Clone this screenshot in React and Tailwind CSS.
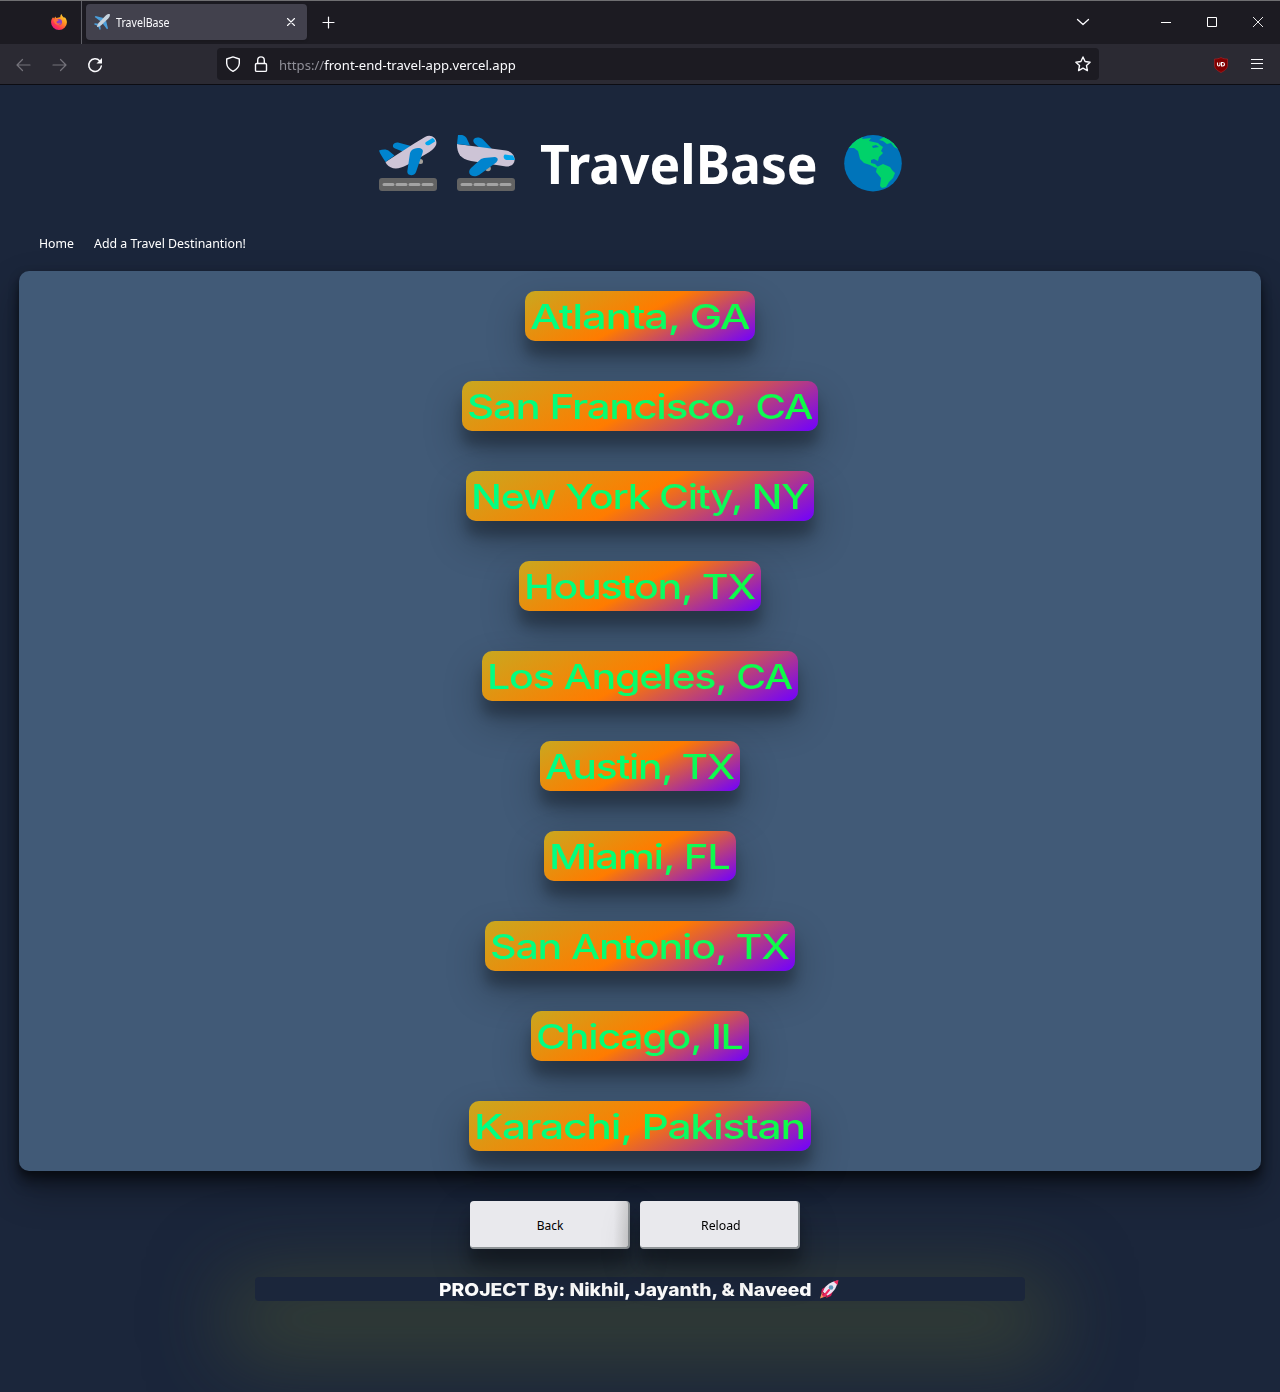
import { useLayoutEffect, useRef } from "react";

function Fit({ w, className = "", children }) {
  const ref = useRef(null);
  useLayoutEffect(() => {
    const el = ref.current;
    el.style.transform = `scaleX(${w / el.offsetWidth})`;
  }, [w]);
  return (
    <span className="block" style={{ width: w }}>
      <span ref={ref} className={`inline-block origin-left whitespace-nowrap ${className}`}>{children}</span>
    </span>
  );
}

const places = [
  ["Atlanta, GA", 230], ["San Francisco, CA", 356], ["New York City, NY", 348], ["Houston, TX", 242],
  ["Los Angeles, CA", 316], ["Austin, TX", 200], ["Miami, FL", 192], ["San Antonio, TX", 310],
  ["Chicago, IL", 218], ["Karachi, Pakistan", 342],
];

const stroke = { fill: "none", stroke: "#fbfbfe", strokeWidth: 1.4, strokeLinecap: "round", strokeLinejoin: "round" };

function Firefox() {
  return (
    <svg width="16" height="16" viewBox="0 0 16 16">
      <defs>
        <linearGradient id="ff" x1="1" y1="0" x2="0.2" y2="1">
          <stop offset="0" stopColor="#fff044" /><stop offset=".4" stopColor="#ff9a1f" />
          <stop offset=".75" stopColor="#ff3a4c" /><stop offset="1" stopColor="#e5148c" />
        </linearGradient>
      </defs>
      <path d="M2 3.2 3.2 4.5 4.2 2.4 5.4 4.1C7 3.4 8.4 3.2 9.3 3.2 9.2 1.9 9.8.7 10.5 0 10.8 1.8 12.2 2.6 13.2 4L13.5 2.9C15.3 4.6 16 6.6 15.9 8.5A7.9 7.5 0 0 1 .1 8.5C0 6.500.6 4.6 2 3.2Z" fill="url(#ff)" />
      <circle cx="8" cy="8.1" r="3" fill="#8a3fc8" />
      <path d="M2.5 6.300C4.500 4.700 7 5 8 6.200 6.500 6.400 6.600 7.500 5.300 7.800 5.500 10 8.500 10 10 8.600 8.800 12 3.700 12 2.500 6.300Z" fill="#ff7139" />
    </svg>
  );
}

function TabPlane() {
  return (
    <svg width="16" height="16" viewBox="0 0 16 16">
      <path d="M9.500 4 1.500 2 .7 3 6.500 7.300ZM12 6.500 14 14.500 13 15.300 8.700 9.500Z" fill="#4a9fdc" />
      <path d="M4.800 9.800.8 9.300 0 10.200 3.800 12ZM6.200 11.200 6.700 15.200 5.800 16 4 12.200Z" fill="#4a9fdc" />
      <path d="M15.800.2C14.500-.2 12.900.3 11.500 1.700L5 8.500C3.800 10 2.900 11.500 3 13 4.500 13.100 6 12.200 7.500 11L14.300 4.500C15.700 3.100 16.200 1.500 15.800.2Z" fill="#c5d3de" />
    </svg>
  );
}

function Runway() {
  return (
    <>
      <rect x="0" y="43" width="58" height="13" rx="3" fill="#636363" />
      <path d="M5 49.500H14M18 49.500H27M31 49.500H40M44 49.500H53" stroke="#a3a3a3" strokeWidth="3" strokeLinecap="round" />
    </>
  );
}

function TakeOff() {
  return (
    <svg width="58" height="57" viewBox="0 0 58 57">
      <circle cx="41.500" cy="26.500" r="2.500" fill="#a5a19c" />
      <path d="M32 11 19 7.500C14 7 12 12 16 13.500L25 17Z" fill="#0084ce" />
      <path d="M6.500 27 36 8 46 2C53-2 60 5 56.500 11 55 14 52 16 47 19L28 30C19 35 12 34.500 7.500 29Z" fill="#cdc4d6" />
      <path d="M0 15.500C4 14 8 14 10 16L15.500 20.500 6.500 27C4 23 1 19 0 15.500Z" fill="#0084ce" />
      <path d="M47 7 53.500 3C55 4 56 5 56 6.500L50.500 10C47 11 45 8.500 47 7Z" fill="#00a6ed" />
      <path d="M32 16C37 11 46 13 43.500 18L37 37C35 42 27 41 28.500 35L31 18Z" fill="#0084ce" />
      <Runway />
    </svg>
  );
}

function Landing() {
  return (
    <svg width="58" height="57" viewBox="0 0 58 57">
      <circle cx="31" cy="33.500" r="2.800" fill="#a5a19c" />
      <path d="M35 14 26 4.500C20 0 13 4 18 9L23 13Z" fill="#0084ce" />
      <path d="M0 9 49 15.500C60 17 61 32 49 31.500L14 26C3 24 0 18 0 9Z" fill="#cdc4d6" />
      <path d="M1 0C7-1 9 2 10 4L13 10.500 0 9Z" fill="#0084ce" />
      <path d="M48 19.500 56 20.500 58 25H49.500C46 24.500 46 20 48 19.500Z" fill="#00a6ed" />
      <path d="M27 23 38 22C42 23 41 26 38.500 28L22 40C15 44 9 38 14 33L24 24Z" fill="#0084ce" />
      <Runway />
    </svg>
  );
}

function Globe() {
  return (
    <svg width="58" height="57" viewBox="0 0 58 57">
      <defs><clipPath id="globe"><ellipse cx="29" cy="28.200" rx="28.800" ry="28.200" /></clipPath></defs>
      <g clipPath="url(#globe)">
        <rect width="58" height="57" fill="#0074ba" />
        <path d="M4 13 14 3 19 2 18 4 27 3 25 6 34 8 36 10 39 12 37 16 39 18 35 22 34 26 30 24 27 25 27 28 31 29 34 32 32 33 26 30 20 28 16 24 14 16 10 13Z" fill="#00d26a" />
        <path d="M35 5 40 2 48 5 54 14 50 12 47 8 43 9 39 6ZM33 32 39 29 46 32 48 35 51 38 49 43 45 47 42 52 38 53 36 51 37 43 32 37Z" fill="#00d26a" />
        <path d="M28 11 32 10 35 12 29 13Z" fill="#0074ba" />
      </g>
    </svg>
  );
}

function Rocket() {
  return (
    <svg width="20" height="19" viewBox="0 0 20 19">
      <path d="M3 12 1 18.500 8 16Z" fill="#f8915f" />
      <path d="M8 6 3 9 2 13 8 10ZM14 11 12 16 7 18 9 12Z" fill="#d1164f" />
      <path d="M4 12C5 7 10 2 18.500.5 18.500 8 13 14 8 15.500Z" fill="#ece4f2" />
      <path d="M14.500 1.500 19.500 0 18.500 5Z" fill="#f0285e" />
      <path d="M4 12 3 15 4 16 8 15.500Z" fill="#d1164f" />
      <circle cx="12" cy="7.500" r="2.300" fill="#5f93b8" />
      <path d="M10 10 5 16" stroke="#f0285e" strokeWidth="2" strokeLinecap="round" />
    </svg>
  );
}

function Browser() {
  return (
    <header className="h-[85px] shrink-0 border-b border-[#0c0c12] font-['Noto_Sans','Open_Sans',sans-serif] text-[#fbfbfe]">
      <div className="flex h-11 items-center border-t border-[#6f6f72] bg-[#1c1b22]">
        <div className="flex h-full w-[82px] items-center border-r border-[#5f5f66] pb-[2px] pl-[51px]"><Firefox /></div>
        <div className="mb-px ml-1 flex h-9 w-[221px] items-center rounded bg-[#42414d] pl-2 pr-[10px] shadow">
          <TabPlane />
          <div className="ml-[6px] pt-px text-[12px]"><Fit w={54}>TravelBase</Fit></div>
          <svg className="ml-auto" width="12" height="12" viewBox="0 0 12 12"><path d="m2.500 2.500 7 7M9.500 2.500l-7 7" {...stroke} strokeWidth="1.100" /></svg>
        </div>
        <svg className="ml-[15px]" width="13" height="13" viewBox="0 0 13 13"><path d="M6.500 1v11M1 6.500h11" {...stroke} strokeWidth="1.200" /></svg>
        <svg className="ml-auto mr-[70px]" width="14" height="10" viewBox="0 0 14 10"><path d="m1.500 1.500 5.500 5 5.500-5" {...stroke} strokeWidth="1.300" /></svg>
        <svg className="mr-[34px]" width="12" height="12" viewBox="0 0 12 12"><path d="M1 5.500h10" stroke="#fff" /></svg>
        <svg className="mr-[34px]" width="12" height="12" viewBox="0 0 12 12"><path d="M1.500.5h9v9h-9z" fill="none" stroke="#fff" /></svg>
        <svg className="mr-4" width="12" height="12" viewBox="0 0 12 12"><path d="m1 0 10 10M11 0 1 10" stroke="#fff" strokeWidth=".9" /></svg>
      </div>
      <div className="flex h-10 items-center bg-[#2b2a33] pt-px">
        <svg className="ml-4" width="15" height="14" viewBox="0 0 15 14"><path d="M14 7H1M6.500 1.500 1 7l5.500 5.500" {...stroke} stroke="#74737b" strokeWidth="1.200" /></svg>
        <svg className="ml-[21px]" width="15" height="14" viewBox="0 0 15 14"><path d="M1 7h13M8.500 1.500 14 7l-5.500 5.500" {...stroke} stroke="#74737b" strokeWidth="1.200" /></svg>
        <svg className="ml-5" width="16" height="16" viewBox="0 0 16 16"><path d="M12.800 4A6.300 6.300 0 1 0 14.300 9" {...stroke} strokeWidth="1.500" /><path d="M15 1v5.500H9.500Z" fill="#fbfbfe" /></svg>
        <div className="mb-px ml-[114px] flex h-8 w-[882px] items-center rounded bg-[#1c1b22] pl-2 pr-2">
          <svg width="16" height="16" viewBox="0 0 16 16"><path d="M8 .9 14.300 3v4.500C14 11 11.500 13.500 8 15.300 4.500 13.500 2 11 1.700 7.500V3Z" {...stroke} /></svg>
          <svg className="ml-3" width="16" height="17" viewBox="0 0 16 17"><path d="M4.700 7.500V4.200a3.300 3.300 0 0 1 6.600 0v3.300M3.700 7.500h8.600q1.200 0 1.200 1.200v5.500q0 1.200-1.200 1.200H3.700q-1.200 0-1.200-1.200V8.700q0-1.200 1.200-1.200Z" {...stroke} /></svg>
          <div className="ml-[10px] pt-[3px] text-[13px]"><Fit w={237}><span className="text-[#8f8f98]">https://</span>front-end-travel-app.vercel.app</Fit></div>
          <svg className="ml-auto" width="16" height="16" viewBox="0 0 16 16"><path d="m8 1 2.100 4.500 5 .7-3.600 3.400.9 5L8 12.200l-4.400 2.400.9-5L.9 6.200l5-.7Z" {...stroke} /></svg>
        </div>
        <svg className="ml-[114px]" width="16" height="16" viewBox="0 0 16 16"><path d="M8 .5c2 1.200 4.300 1.500 6.500 1.500v6c0 4-3.500 6-6.500 7.500-3-1.500-6.500-3.500-6.500-7.500V2C3.700 2 6 1.700 8 .5Z" fill="#800000" stroke="#a22226" strokeWidth=".7" /><path d="M4.500 5.500v2.300q0 1.200 1.200 1.200T7 7.800V5.500M8.500 5.500V9h1.300q1.700 0 1.700-1.700T9.800 5.500Z" fill="none" stroke="#fff" strokeWidth="1.100" /></svg>
        <svg className="ml-[22px]" width="12" height="12" viewBox="0 0 12 12"><path d="M0 .5h12M0 4.500h12M0 9.500h12" stroke="#fbfbfe" strokeWidth="1.200" /></svg>
      </div>
    </header>
  );
}

export default function App() {
  return (
    <div className="flex h-[1392px] w-[1280px] flex-col overflow-hidden bg-[#1b263b] font-['Noto_Sans','Open_Sans',sans-serif] text-white">
      <Browser />
      <h1 className="mt-[49px] flex h-[58px] items-center pl-[379px] text-[54px] font-bold leading-[58px]">
        <TakeOff />
        <span className="ml-5"><Landing /></span>
        <span className="mb-[1px] ml-[25px]"><Fit w={278}>TravelBase</Fit></span>
        <span className="ml-[26px]"><Globe /></span>
      </h1>
      <nav className="mt-[41px] flex h-5 gap-5 pl-[39px] text-[13px] leading-5">
        <Fit w={35}>Home</Fit>
        <Fit w={152}>Add a Travel Destinantion!</Fit>
      </nav>
      <main className="mx-[19px] mt-[18px] flex h-[900px] shrink-0 flex-col items-center gap-10 rounded-[10px] bg-[#415a77] pt-5 shadow-[0_19px_38px_rgba(0,0,0,.3),0_15px_12px_rgba(0,0,0,.22),0_5px_10px_rgba(0,0,0,.5)]">
        {places.map(([name, w]) => (
          <div key={name} style={{ width: w }} className="flex h-[50px] shrink-0 items-center rounded-[10px] bg-[linear-gradient(152deg,#c9a81f_0%,#ff7b00_50%,#7000ff_100%)] pl-[5px] font-['Inter',sans-serif] text-[33.500px] font-medium leading-[50px] tracking-[-1px] shadow-[0_19px_38px_rgba(0,0,0,.3),0_15px_12px_rgba(0,0,0,.22)]">
            <Fit w={w - 11} className="relative top-px bg-linear-to-r from-[#00ff85] to-[#10fb45] bg-clip-text text-transparent">{name}</Fit>
          </div>
        ))}
      </main>
      <div className="relative z-10 mt-[30px] flex h-12 shrink-0 gap-[10px] pl-[470px] text-[12px] text-black">
        <button className="flex w-40 items-center justify-center rounded border-b-2 border-r-2 border-[#8f9497] bg-[linear-gradient(90deg,#e9e9ed_91%,#d0d0d2)] pl-[2px] pt-[3px] shadow-[0_19px_38px_rgba(0,0,0,.3),0_15px_12px_rgba(0,0,0,.22)]"><Fit w={27}>Back</Fit></button>
        <button className="flex w-40 items-center justify-center rounded border-b-2 border-r-2 border-[#8f9497] bg-[#e9e9ed] pl-[2px] pt-[3px] shadow-[0_19px_38px_rgba(0,0,0,.3),0_15px_12px_rgba(0,0,0,.22)]"><Fit w={40}>Reload</Fit></button>
      </div>
      <footer className="mt-7 ml-[255px] flex h-6 w-[770px] shrink-0 items-center rounded-sm bg-[#1b263b] pl-[184px] font-['Inter',sans-serif] text-[18px] font-extrabold leading-6 shadow-[0_30px_80px_26px_rgba(80,90,48,.52)]">
        <span className="pt-[2px]"><Fit w={373}>PROJECT By: Nikhil, Jayanth, &amp; Naveed</Fit></span>
        <span className="ml-[7px] pt-px"><Rocket /></span>
      </footer>
    </div>
  );
}
